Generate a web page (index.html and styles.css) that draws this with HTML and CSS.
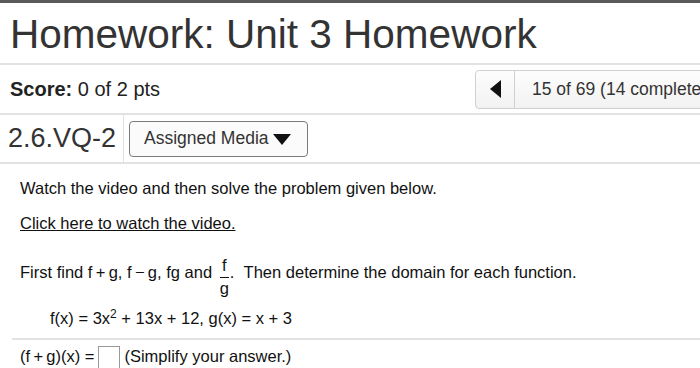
FILE: index.html
```html
<!DOCTYPE html>
<html lang="en">
<head>
    <meta charset="UTF-8">
    <title>Homework: Unit 3 Homework</title>
    <link rel="stylesheet" href="styles.css">
</head>
<body>
    <div class="topbar"></div>
    <h1 class="title">Homework: Unit 3 Homework</h1>

    <div class="score-row">
        <div class="score"><b>Score:</b> 0 of 2 pts</div>
        <div class="nav">
            <button class="nav-prev"><span class="tri-left"></span></button>
            <div class="nav-count">15 of 69 (14 complete)</div>
        </div>
    </div>

    <div class="question-row">
        <div class="qid">2.6.VQ-2</div>
        <div class="media">
            <button class="media-btn">Assigned Media <span class="tri-down"></span></button>
        </div>
    </div>

    <div class="question">
        <p class="intro">Watch the video and then solve the problem given below.</p>
        <p class="link"><a href="#">Click here to watch the video.</a></p>

        <p class="task">First find f&thinsp;+&thinsp;g, f&thinsp;&minus;&thinsp;g, fg and
            <span class="frac"><span class="num">f</span><span class="den">g</span></span>.
            &nbsp;Then determine the domain for each function.</p>
        <p class="funcs">f(x) = 3x<sup>2</sup> + 13x + 12, g(x) = x + 3</p>
    </div>

    <div class="answer">
        (f&thinsp;+&thinsp;g)(x) =<span class="box"></span>(Simplify your answer.)
    </div>
</body>
</html>
```

FILE: styles.css
```css
body {
    font-family: "Liberation Sans", Arial, sans-serif;
    margin: 0;
    background: #fff;
    color: #222;
    overflow: hidden;
}
.topbar {
    height: 3px;
    background: #5a5a5a;
}
.title {
    margin: 0;
    padding: 8px 10px 0;
    height: 52px;
    font-size: 40.5px;
    font-weight: normal;
    color: #333;
    border-bottom: 2px solid #e2e2e2;
    white-space: nowrap;
}
.score-row {
    display: flex;
    align-items: center;
    height: 48px;
    border-bottom: 2px solid #e2e2e2;
}
.score {
    padding-left: 10px;
    font-size: 20px;
    color: #222;
}
.nav {
    display: flex;
    align-items: stretch;
    flex-shrink: 0;
    width: 290px;
    height: 37px;
    margin-left: auto;
    margin-right: -67px;
    border: 1px solid #d0d0d0;
    border-radius: 4px;
    background: linear-gradient(#fdfdfd, #f2f2f2);
    white-space: nowrap;
}
.nav-prev {
    width: 39px;
    border: none;
    border-right: 1px solid #d0d0d0;
    background: transparent;
    display: flex;
    align-items: center;
    justify-content: center;
    padding: 0;
}
.tri-left {
    width: 0;
    height: 0;
    border-top: 9px solid transparent;
    border-bottom: 9px solid transparent;
    border-right: 11px solid #111;
}
.nav-count {
    display: flex;
    align-items: center;
    padding-left: 17px;
    font-size: 17.5px;
    color: #333;
}
.question-row {
    display: flex;
    align-items: stretch;
    height: 47px;
    border-bottom: 2px solid #e2e2e2;
}
.qid {
    display: flex;
    align-items: center;
    padding: 0 0 0 8px;
    width: 115px;
    font-size: 27px;
    color: #333;
    border-right: 1px solid #e2e2e2;
}
.media {
    display: flex;
    align-items: center;
    padding-left: 5px;
}
.media-btn {
    height: 36px;
    width: 179px;
    font-family: inherit;
    font-size: 17.5px;
    color: #333;
    background: #fbfbfb;
    border: 1px solid #7a7a7a;
    border-radius: 4px;
    text-align: left;
    padding: 0 0 0 14px;
}
.tri-down {
    display: inline-block;
    vertical-align: middle;
    width: 0;
    height: 0;
    border-left: 9px solid transparent;
    border-right: 9px solid transparent;
    border-top: 11px solid #111;
}
.question {
    padding: 0 20px;
    font-size: 16.5px;
    color: #111;
}
.question p {
    margin: 0;
}
.intro {
    padding-top: 15px;
}
.link {
    padding-top: 16px;
}
.link a {
    color: #111;
}
.task {
    padding-top: 24px;
    line-height: 20px;
}
.frac {
    display: inline-flex;
    flex-direction: column;
    align-items: center;
    vertical-align: 7px;
    line-height: 16px;
    margin: 0 1px 0 3px;
}
.frac .num {
    border-bottom: 1px solid #111;
    padding: 0 2px 4px;
}
.frac .den {
    padding-top: 2px;
}
.funcs {
    padding: 13px 0 0 30px;
}
.funcs sup {
    font-size: 12px;
    line-height: 0;
}
.answer {
    margin: 10px 0 0 12px;
    padding: 6px 0 0 8px;
    border-top: 2px solid #e2e2e2;
    font-size: 16.5px;
    color: #111;
}
.box {
    display: inline-block;
    width: 20px;
    height: 22px;
    border: 1px solid #999;
    vertical-align: -8px;
    margin: 0 4px 0 4px;
}
```
